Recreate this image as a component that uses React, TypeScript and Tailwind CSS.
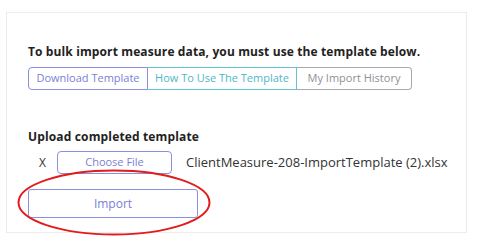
export default function App() {
  return (
    <div className="w-[480px] h-[250px] bg-white pt-3 pl-[6px] font-['Open_Sans',sans-serif]">
      <div className="w-[461px] h-[221px] border border-[#ececec] pl-[21px] pt-[31px]">
        {/* TEMPLATE SECTION */}
        <h2 className="text-[12px] font-bold text-[#222] leading-[16px] tracking-[0.12px]">
          To bulk import measure data, you must use the template below.
        </h2>
        <div className="flex mt-[7px] h-[23px] text-[11px]">
          <button className="w-[120px] border border-[#8c8ee0] rounded-l-[4px] text-[#7b7fd3]">
            Download Template
          </button>
          <button className="w-[149px] border-y border-r border-[#5ec3d2] text-[#4fb6c8]">
            How To Use The Template
          </button>
          <button className="w-[115px] border-y border-r border-[#a9a9ad] rounded-r-[4px] text-[#8f8f95]">
            My Import History
          </button>
        </div>

        {/* UPLOAD SECTION */}
        <h2 className="mt-[39px] text-[12px] font-bold text-[#222] leading-[16px] tracking-[0.15px]">
          Upload completed template
        </h2>
        <div className="flex items-center mt-[6px] h-[23px] text-[12px] text-[#333]">
          <span className="ml-[11px] w-[18px]">X</span>
          <button className="w-[115px] h-[23px] border border-[#8c8ee0] rounded-[4px] text-[11px] text-[#7b7fd3]">
            Choose File
          </button>
          <span className="ml-[14px] text-[13px] text-[#333]">
            ClientMeasure-208-ImportTemplate (2).xlsx
          </span>
        </div>
        <div className="relative mt-[15px] w-[170px]">
          <button className="w-[170px] h-[29px] border border-[#8c8ee0] rounded-[3px] text-[12px] text-[#7b7fd3]">
            Import
          </button>
          <svg
            className="absolute left-[-11px] top-[-20px] pointer-events-none"
            width="194"
            height="67"
            viewBox="0 0 194 67"
          >
            <ellipse cx="97" cy="33.5" rx="95.5" ry="32" fill="none" stroke="#e21b1b" strokeWidth="2" />
          </svg>
        </div>
      </div>
    </div>
  );
}
